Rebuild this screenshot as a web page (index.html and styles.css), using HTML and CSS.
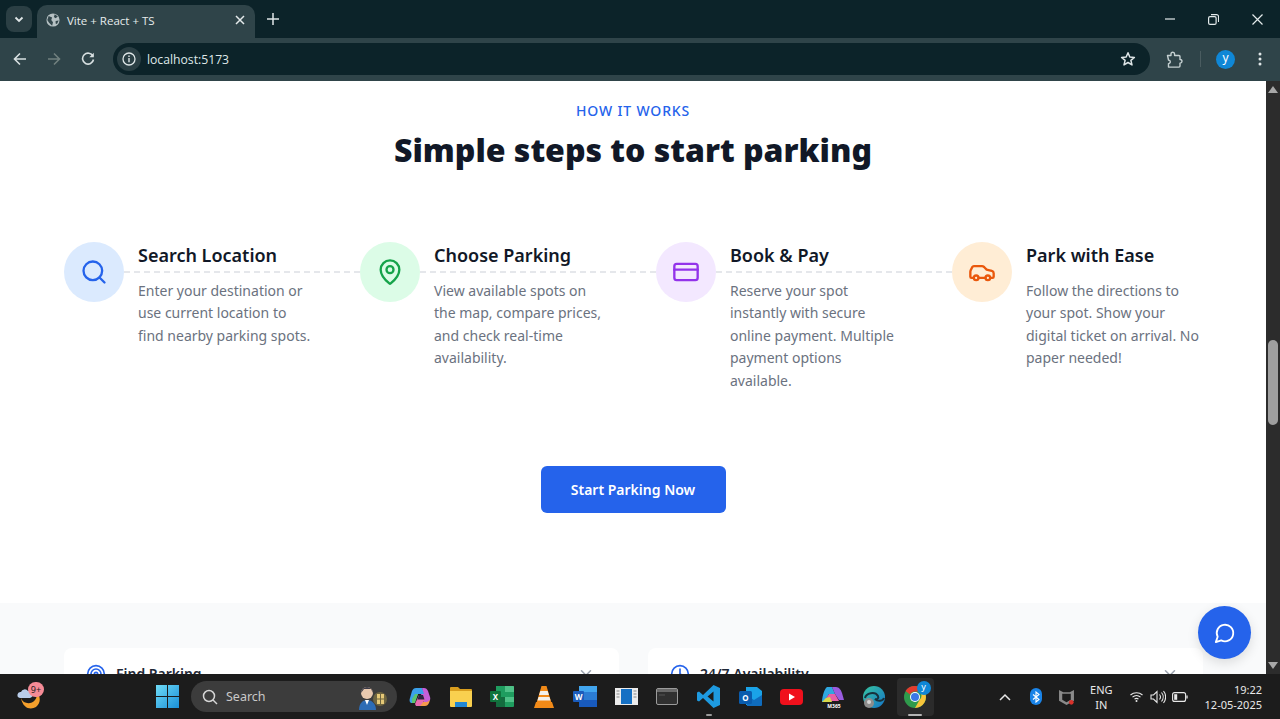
FILE: index.html
```html
<!DOCTYPE html>
<html>

<head>
    <meta name="viewport" content="width=device-width, initial-scale=1">
    <title>Vite + React + TS</title>
    <link rel="stylesheet" href="styles.css">
</head>

<body>
    <div class="screen">
        <!-- Browser frame -->
        <div class="tabstrip">
            <div class="tab-search">
                <svg width="12" height="12" viewBox="0 0 12 12"><path d="M2.500 4.500 6 8l3.500-3.500" fill="none" stroke="#dfe6e7" stroke-width="1.800"/></svg>
            </div>
            <div class="tab">
                <svg width="14" height="14" viewBox="0 0 16 16"><circle cx="8" cy="8" r="7.500" fill="#b6c1c3"/><path d="M3 3.500 7 5 6 8 8 10.500 7 14.500 3.500 11 1.500 8ZM10 1.500 13.500 4 11 6 9 4.500ZM11 9l3.500-.5-2 4-1.500-.5Z" fill="#33474c"/></svg>
                <span class="tab-title">Vite + React + TS</span>
                <svg class="tab-close" width="10" height="10" viewBox="0 0 10 10"><path d="M1 1l8 8M9 1l-8 8" stroke="#e4eaeb" stroke-width="1.500"/></svg>
            </div>
            <svg class="new-tab" width="12" height="12" viewBox="0 0 12 12"><path d="M6 0v12M0 6h12" stroke="#dfe6e7" stroke-width="1.500"/></svg>
            <div class="win-btns">
                <svg width="10" height="10" viewBox="0 0 10 10"><path d="M0 5h10" stroke="#e4eaeb" stroke-width="1.200"/></svg>
                <svg width="11" height="11" viewBox="0 0 11 11"><rect x=".6" y="2.600" width="7.500" height="7.800" rx="1.500" fill="none" stroke="#e4eaeb" stroke-width="1.200"/><path d="M3 .6h5.500a2 2 0 0 1 2 2V8" fill="none" stroke="#e4eaeb" stroke-width="1.100"/></svg>
                <svg width="11" height="11" viewBox="0 0 11 11"><path d="M.5.5l10 10M10.500.5l-10 10" stroke="#e4eaeb" stroke-width="1.200"/></svg>
            </div>
        </div>
        <div class="toolbar">
            <svg class="nav-icon" width="14" height="14" viewBox="0 0 14 14"><path d="M13 7H2M7 1.500 1.500 7 7 12.500" fill="none" stroke="#d8e0e1" stroke-width="1.600"/></svg>
            <svg class="nav-icon" width="14" height="14" viewBox="0 0 14 14"><path d="M1 7h11M7 1.500 12.500 7 7 12.500" fill="none" stroke="#71807f" stroke-width="1.600"/></svg>
            <svg class="nav-icon" width="14" height="14" viewBox="0 0 14 14"><path d="M12 4.200A5.500 5.500 0 1 0 12.500 7.500" fill="none" stroke="#d8e0e1" stroke-width="1.600"/><path d="M12.800 .8v4.500H8.300z" fill="#d8e0e1"/></svg>
            <div class="omnibox">
                <div class="site-info">
                    <svg width="14" height="14" viewBox="0 0 14 14"><circle cx="7" cy="7" r="6" fill="none" stroke="#dfe6e7" stroke-width="1.300"/><path d="M7 6v4.200M7 3.500v1.400" stroke="#dfe6e7" stroke-width="1.400"/></svg>
                </div>
                <span class="url">localhost:5173</span>
                <svg class="star" width="16" height="16" viewBox="0 0 16 16"><path d="M8 1.800 9.800 6l4.600.4-3.500 3 1.100 4.500L8 11.500l-4 2.400 1.100-4.500-3.500-3L6.200 6Z" fill="none" stroke="#dfe6e7" stroke-width="1.500" stroke-linejoin="round"/></svg>
            </div>
            <svg class="puzzle" width="17" height="17" viewBox="0 0 17 17"><path d="M1.500 4.500h3.500V3a1.800 1.800 0 0 1 3.600 0v1.500h4.400a1 1 0 0 1 1 1v3h.2a1.800 1.800 0 0 1 0 3.600h-.2v3a1 1 0 0 1-1 1H2.500v-3.500a1.800 1.800 0 0 0 0-3.600z" fill="none" stroke="#c5d0d1" stroke-width="1.400" stroke-linejoin="round"/></svg>
            <span class="tool-sep"></span>
            <span class="avatar">y</span>
            <svg class="kebab" width="4" height="14" viewBox="0 0 4 14"><circle cx="2" cy="2" r="1.500" fill="#dfe6e7"/><circle cx="2" cy="7" r="1.500" fill="#dfe6e7"/><circle cx="2" cy="12" r="1.500" fill="#dfe6e7"/></svg>
        </div>

        <div class="viewport">
            <div class="page">
                <section class="how">
                    <p class="kicker">HOW IT WORKS</p>
                    <h2>Simple steps to start parking</h2>

                    <div class="steps">
                        <div class="step">
                            <div class="step-icon blue">
                                <svg width="28" height="28" viewBox="0 0 24 24"><circle cx="11" cy="11" r="8"/><path d="m21 21-4.300-4.300"/></svg>
                            </div>
                            <div class="step-text">
                                <h3>Search Location</h3>
                                <p>Enter your destination or use current location to find nearby parking spots.</p>
                            </div>
                        </div>
                        <div class="step">
                            <div class="step-icon green">
                                <svg width="28" height="28" viewBox="0 0 24 24"><path d="M20 10c0 5-5.500 10.200-7.400 11.800a1 1 0 0 1-1.200 0C9.500 20.200 4 15 4 10a8 8 0 0 1 16 0"/><circle cx="12" cy="10" r="3"/></svg>
                            </div>
                            <div class="step-text">
                                <h3>Choose Parking</h3>
                                <p>View available spots on the map, compare prices, and check real-time availability.</p>
                            </div>
                        </div>
                        <div class="step">
                            <div class="step-icon purple">
                                <svg width="28" height="28" viewBox="0 0 24 24"><rect x="2" y="5" width="20" height="14" rx="2"/><path d="M2 10h20"/></svg>
                            </div>
                            <div class="step-text">
                                <h3>Book &amp; Pay</h3>
                                <p>Reserve your spot instantly with secure online payment. Multiple payment options available.</p>
                            </div>
                        </div>
                        <div class="step">
                            <div class="step-icon orange">
                                <svg width="28" height="28" viewBox="0 0 24 24"><path d="M19 17h2c.6 0 1-.4 1-1v-3c0-.9-.7-1.700-1.500-1.900C18.700 10.600 16 10 16 10s-1.300-1.400-2.200-2.300c-.5-.4-1.100-.7-1.800-.7H5c-.6 0-1.100.4-1.400.9l-1.400 2.900A3.700 3.700 0 0 0 2 12v4c0 .6.4 1 1 1h2"/><circle cx="7" cy="17" r="2"/><path d="M9 17h6"/><circle cx="17" cy="17" r="2"/></svg>
                            </div>
                            <div class="step-text">
                                <h3>Park with Ease</h3>
                                <p>Follow the directions to your spot. Show your digital ticket on arrival. No paper needed!</p>
                            </div>
                        </div>
                    </div>

                    <button class="cta">Start Parking Now</button>
                </section>

                <section class="features">
                    <div class="feature-card">
                        <svg class="feature-icon" width="20" height="20" viewBox="0 0 24 24"><circle cx="12" cy="12" r="10"/><circle cx="12" cy="12" r="6"/><circle cx="12" cy="12" r="2"/></svg>
                        <span class="feature-title">Find Parking</span>
                        <svg class="feature-chevron" width="18" height="18" viewBox="0 0 24 24"><path d="m6 9 6 6 6-6"/></svg>
                    </div>
                    <div class="feature-card">
                        <svg class="feature-icon" width="20" height="20" viewBox="0 0 24 24"><circle cx="12" cy="12" r="10"/><path d="M12 6v6l4 2"/></svg>
                        <span class="feature-title">24/7 Availability</span>
                        <svg class="feature-chevron" width="18" height="18" viewBox="0 0 24 24"><path d="m6 9 6 6 6-6"/></svg>
                    </div>
                </section>

                <button class="chat-fab">
                    <svg width="22" height="22" viewBox="0 0 24 24"><path d="M7.900 20A9 9 0 1 0 4 16.100L2 22Z"/></svg>
                </button>
            </div>

            <div class="scrollbar">
                <svg width="10" height="7" viewBox="0 0 10 7"><path d="M5 0l5 7H0z" fill="#a8a8a8"/></svg>
                <div class="scroll-track"><div class="scroll-thumb"></div></div>
                <svg width="10" height="7" viewBox="0 0 10 7"><path d="M5 7l5-7H0z" fill="#a8a8a8"/></svg>
            </div>
        </div>

        <!-- Windows taskbar -->
        <div class="taskbar">
            <div class="weather">
                <svg width="26" height="28" viewBox="0 0 26 28"><path d="M4 15c2 6 10 7 14 2 2-2 2-6 1-8 5 4 5 11 0 15-5 3-13 2-15-9Z" fill="#f5a02c"/><path d="M3 15a3 3 0 0 1 1-6 4 4 0 0 1 7-1 3.500 3.500 0 0 1 2 7Z" fill="#b9cdea"/></svg>
                <span class="badge">9+</span>
            </div>
            <div class="task-center">
                <svg class="start" width="23" height="23" viewBox="0 0 23 23"><defs><linearGradient id="win" x1="0" y1="0" x2="1" y2="1"><stop offset="0" stop-color="#6fdcf7"/><stop offset="1" stop-color="#1a8fd8"/></linearGradient></defs><path d="M0 0h11v11H0zM12 0h11v11H12zM0 12h11v11H0zM12 12h11v11H12z" fill="url(#win)"/></svg>
                <div class="search-box">
                    <svg width="16" height="16" viewBox="0 0 16 16"><circle cx="7" cy="7" r="5.500" fill="none" stroke="#d5d5d5" stroke-width="1.500"/><path d="m11 11 4 4" stroke="#d5d5d5" stroke-width="1.500"/></svg>
                    <span>Search</span>
                    <svg class="search-art" width="34" height="28" viewBox="0 0 34 28"><circle cx="22" cy="16" r="7" fill="#6d6440"/><path d="M19 11h7v10h-7z" fill="#e5c877"/><path d="M22.500 11v10M19 16h7" stroke="#6d6440"/><circle cx="9" cy="10" r="6" fill="#e9c9ae"/><path d="M3 10a6 6 0 0 1 12 0l-2-4H6Z" fill="#3c3c48"/><path d="M1 27c0-7 4-10 8-10s9 3 9 10Z" fill="#2d6cb5"/><path d="M7 17h4l-2 5Z" fill="#fff"/></svg>
                </div>
                <div class="task-icons">
                    <span class="task-icon"><svg width="22" height="22" viewBox="0 0 22 22"><path d="M7 2h6l3 6H9l-4 9H3C1 17 0 15 1 12l2-7c1-2 2-3 4-3Z" fill="#3aa0ea"/><path d="M3 17h3l3-9H6l-3 5Z" fill="#5ac46f"/><path d="M13 2h2c2 0 3 1 4 3l2 6c1 3-1 5-3 5h-3l-3-8h3Z" fill="#c55fd8"/><path d="M9 20h7c2 0 3-1 4-3l1-3-3 2h-4l-2-2-3 4Z" fill="#f59a4c"/><path d="M7 20h4l5-6-2-5h-4l-4 9Z" fill="#e86bb0"/><path d="M10 9h4l1.500 4.500H8.500Z" fill="#2a2440"/></svg></span>
                    <span class="task-icon"><svg width="24" height="21" viewBox="0 0 24 21"><path d="M1 2a1 1 0 0 1 1-1h7l2 2h11a1 1 0 0 1 1 1v3H1Z" fill="#d99e1e"/><path d="M1 5h22v15a1 1 0 0 1-1 1H2a1 1 0 0 1-1-1Z" fill="#f9d04f"/><path d="M6 21v-5h12v5Z" fill="#1f86d4"/></svg></span>
                    <span class="task-icon"><svg width="24" height="21" viewBox="0 0 24 21"><path d="M6 0h17a1 1 0 0 1 1 1v19a1 1 0 0 1-1 1H6Z" fill="#1f9d5f"/><path d="M15 0h8a1 1 0 0 1 1 1v5h-9zM15 11h9v5h-9z" fill="#4fc187"/><path d="M6 11h9v10H6z" fill="#146c3f"/><rect x="0" y="5" width="11" height="11" rx="1" fill="#10743c"/><text class="icon-letter" x="5.500" y="13.500" text-anchor="middle">X</text></svg></span>
                    <span class="task-icon"><svg width="20" height="22" viewBox="0 0 20 22"><path d="M7.500 0h5l5 17h-15Z" fill="#f28a18"/><path d="M6.300 5h7.400l1.200 4H5.100zM4.500 11h11l1 3.500h-13Z" fill="#f3f0ea"/><path d="M2 16h16l2 6H0Z" fill="#f28a18"/></svg></span>
                    <span class="task-icon"><svg width="24" height="21" viewBox="0 0 24 21"><path d="M6 0h17a1 1 0 0 1 1 1v19a1 1 0 0 1-1 1H6Z" fill="#2b7cd3"/><path d="M6 0h18v6H6z" fill="#41a5ee"/><path d="M6 14h18v7H6z" fill="#185abd"/><rect x="0" y="5" width="11" height="11" rx="1" fill="#1a5cbc"/><text class="icon-letter" x="5.500" y="13.500" text-anchor="middle">W</text></svg></span>
                    <span class="task-icon"><svg width="23" height="17" viewBox="0 0 23 17"><rect width="23" height="17" fill="#ececec"/><rect x="6" y="1" width="11" height="15" fill="#1570c4"/><path d="M1.500 3h3M1.500 6h3M1.500 9h3M18.500 3h3M18.500 6h3M18.500 9h3" stroke="#888"/></svg></span>
                    <span class="task-icon"><svg width="22" height="17" viewBox="0 0 22 17"><rect x=".5" y=".5" width="21" height="16" rx="1.500" fill="#303030" stroke="#9b9b9b"/><path d="M1 1h20v3H1z" fill="#6a6a6a"/><path d="M3 7h6" stroke="#555"/></svg></span>
                    <span class="task-icon running"><svg width="23" height="23" viewBox="0 0 23 23"><path d="M16.500 0 23 3v17l-6.500 3L6 13l-4 3.500-2-1V7.500l2-1L6 10ZM16.500 6.500 10.500 11.500l6 5Z" fill="#1e9ae0"/></svg></span>
                    <span class="task-icon"><svg width="23" height="22" viewBox="0 0 23 22"><path d="M7 1h11l5 4v13a1 1 0 0 1-1 1H7Z" fill="#1aa3e8"/><path d="M7 9l8 5 8-5v10a1 1 0 0 1-1 1H8Z" fill="#0f6cbd"/><rect x="0" y="5" width="13" height="13" rx="1.500" fill="#0a5cad"/><text class="icon-letter" x="6.500" y="15" text-anchor="middle">O</text></svg></span>
                    <span class="task-icon"><svg width="23" height="16" viewBox="0 0 23 16"><rect width="23" height="16" rx="4" fill="#f0101c"/><path d="M9 4.500v7l6-3.500Z" fill="#fff"/></svg></span>
                    <span class="task-icon"><svg width="24" height="24" viewBox="0 0 24 24"><path d="M6 2h5l3 7H8l-5 8H1c0-4 2-13 5-15Z" fill="#2fa8e0"/><path d="M11 2h4c3 0 5 3 6 6l2 7h-5l-4-6Z" fill="#9a5ce0"/><path d="M8 9h6l4 7H3Z" fill="#e85fa8"/><path d="M1 17h10l-2-5-4 1Z" fill="#d8d84a"/><text class="m365" x="13" y="23" text-anchor="middle">M365</text></svg></span>
                    <span class="task-icon"><svg width="24" height="24" viewBox="0 0 24 24"><defs><linearGradient id="edge" x1="0" y1="0" x2="1" y2="1"><stop offset="0" stop-color="#36c5a0"/><stop offset="1" stop-color="#1674c8"/></linearGradient></defs><circle cx="12" cy="12" r="11" fill="url(#edge)"/><path d="M3 13c1-5 10-7 13-2 1 2-1 4-3 3 3 3 8 2 9-1" fill="none" stroke="#17313c" stroke-width="2"/><circle cx="7" cy="18" r="5" fill="#8d8d8d"/><circle cx="7" cy="17" r="2" fill="#d5d5d5"/></svg></span>
                    <span class="task-icon chrome-active"><svg width="24" height="24" viewBox="0 0 24 24"><circle cx="12" cy="12" r="11" fill="#2f9b4c"/><path d="M12 1a11 11 0 0 1 9.500 5.500H12a5.500 5.500 0 0 0-5 3L2.500 6A11 11 0 0 1 12 1Z" fill="#e33b2e"/><path d="M21.500 6.500A11 11 0 0 1 12 23l4.500-8a5.500 5.500 0 0 0 0-8.500Z" fill="#f8c43a"/><circle cx="12" cy="12" r="5" fill="#fff"/><circle cx="12" cy="12" r="4" fill="#3b78e7"/></svg><span class="chrome-badge">y</span></span>
                </div>
            </div>
            <div class="tray">
                <svg class="tray-up" width="12" height="8" viewBox="0 0 12 8"><path d="M1 7l5-5 5 5" fill="none" stroke="#e8e8e8" stroke-width="1.500"/></svg>
                <span class="bt-pill"><svg width="8" height="12" viewBox="0 0 8 12"><path d="M1 3.500l6 5L4 11V1l3 2.500-6 5" fill="none" stroke="#fff" stroke-width="1.100"/></svg></span>
                <svg class="mcafee" width="15" height="16" viewBox="0 0 14 15"><path d="M0 1l4 2h6l4-2v10l-7 4-7-4Z" fill="#8a8a8a"/><path d="M3 4.500h8v5.500l-4 2.500-4-2.500Z" fill="#1c1c1c"/><circle cx="11.500" cy="12.500" r="2.200" fill="#d9322b"/></svg>
                <div class="lang">ENG<br>IN</div>
                <div class="tray-status">
                    <svg width="15" height="11" viewBox="0 0 14 11"><path d="M1 4a9 9 0 0 1 12 0M3 6.200a6 6 0 0 1 8 0M5 8.200a3 3 0 0 1 4 0" fill="none" stroke="#e8e8e8" stroke-width="1.100"/><circle cx="7" cy="10" r="1" fill="#e8e8e8"/></svg>
                    <svg width="16" height="14" viewBox="0 0 16 14"><path d="M1 5h2.500L7 1.500v11L3.500 9H1Z" fill="none" stroke="#e8e8e8" stroke-width="1.100"/><path d="M9.500 4.500a4 4 0 0 1 0 5M11.500 2.500a7 7 0 0 1 0 9M13.500 1a9.500 9.500 0 0 1 0 12" fill="none" stroke="#e8e8e8" stroke-width="1.100"/></svg>
                    <svg width="16" height="10" viewBox="0 0 16 10"><rect x=".6" y=".6" width="13" height="8.800" rx="2" fill="none" stroke="#e8e8e8" stroke-width="1.100"/><rect x="2.200" y="2.200" width="3" height="5.600" fill="#e8e8e8"/><path d="M15 3.500v3" stroke="#e8e8e8" stroke-width="1.300"/></svg>
                </div>
                <div class="clock">19:22<br>12-05-2025</div>
            </div>
        </div>
    </div>
</body>

</html>
```
FILE: styles.css
```css
* {
    box-sizing: border-box
}

html,
body {
    margin: 0;
    height: 100%;
    overflow: hidden;
}

body {
    font-family: "Noto Sans", "Open Sans", sans-serif;
}

.screen {
    height: 719px;
    display: flex;
    flex-direction: column;
}

/* Browser frame */
.tabstrip {
    height: 38px;
    background-color: #0c2329;
    display: flex;
    align-items: flex-end;
    padding-left: 6px;
    flex-shrink: 0;
}

.tab-search {
    width: 26px;
    height: 26px;
    margin-bottom: 6px;
    background-color: #2b3f44;
    border-radius: 8px;
    display: flex;
    align-items: center;
    justify-content: center;
}

.tab {
    width: 218px;
    height: 33px;
    margin-left: 5px;
    padding: 0 10px 3px 9px;
    background-color: #2f4449;
    border-radius: 10px 10px 0 0;
    display: flex;
    align-items: center;
    gap: 7px;
}

.tab-title {
    color: #e6ecec;
    font-size: 11.500px;
    font-family: "Open Sans", sans-serif;
    flex: 1;
}

.new-tab {
    margin: 0 0 13px 12px;
}

.win-btns {
    margin-left: auto;
    height: 100%;
    display: flex;
    align-items: center;
    gap: 33px;
    padding: 0 17px 0 0;
}

.toolbar {
    height: 43px;
    background-color: #2f4449;
    display: flex;
    align-items: center;
    padding: 0 18px 1px 13px;
    flex-shrink: 0;
}

.nav-icon {
    margin-right: 20px;
}

.omnibox {
    width: 1038px;
    height: 32px;
    margin-left: -2px;
    background-color: #0c2329;
    border-radius: 16px;
    display: flex;
    align-items: center;
    padding: 0 14px 0 4px;
}

.site-info {
    width: 24px;
    height: 24px;
    background-color: #2b3f44;
    border-radius: 50%;
    display: flex;
    align-items: center;
    justify-content: center;
}

.url {
    color: #dfe8e8;
    font-size: 12.200px;
    font-family: "Open Sans", sans-serif;
    margin-left: 6px;
    flex: 1;
}

.puzzle {
    margin-left: 16px;
}

.tool-sep {
    width: 1px;
    height: 16px;
    background-color: #4a5c60;
    margin-left: 17px;
}

.avatar {
    width: 19px;
    height: 19px;
    margin-left: 15px;
    background-color: #0f87d6;
    border-radius: 50%;
    color: #fff;
    font-size: 12px;
    line-height: 16px;
    text-align: center;
}

.kebab {
    margin-left: 23px;
}

/* Page area */
.viewport {
    flex: 1;
    display: flex;
    min-height: 0;
}

.page {
    flex: 1;
    position: relative;
    overflow: hidden;
    background-color: #fff;
}

.scrollbar {
    width: 14px;
    background-color: #2c2c2c;
    display: flex;
    flex-direction: column;
    align-items: center;
    padding: 5px 0;
}

.scroll-track {
    flex: 1;
    width: 100%;
}

.scroll-thumb {
    width: 10px;
    height: 85px;
    margin: 247px auto 0;
    background-color: #9f9f9f;
    border-radius: 5px;
}

.how {
    height: 522px;
    padding: 20px 64px 0;
    text-align: center;
}

.kicker {
    margin: 0;
    color: #2563eb;
    font-size: 14px;
    line-height: 20px;
    font-weight: 500;
    letter-spacing: 0.85px;
}

h2 {
    margin: 9px 0 0;
    color: #111827;
    font-size: 32px;
    line-height: 40px;
    font-weight: 900;
}

.steps {
    margin-top: 72px;
    display: grid;
    grid-template-columns: repeat(4, 248px);
    gap: 48px;
    text-align: left;
    height: 165px;
}

.step {
    display: flex;
    gap: 14px;
    position: relative;
}

/* Dashed connector to the next step */
.step::after {
    content: "";
    position: absolute;
    left: 60px;
    top: 29px;
    width: 236px;
    border-top: 2px dashed #e5e7eb;
}

.step:last-child::after {
    display: none;
}

.step-icon {
    width: 60px;
    height: 60px;
    border-radius: 50%;
    flex-shrink: 0;
    display: flex;
    align-items: center;
    justify-content: center;
}

.step-icon svg {
    fill: none;
    stroke: currentColor;
    stroke-width: 2;
    stroke-linecap: round;
    stroke-linejoin: round;
}

.blue {
    background-color: #dbeafe;
    color: #2563eb;
}

.green {
    background-color: #dcfce7;
    color: #16a34a;
}

.purple {
    background-color: #f3e8ff;
    color: #9333ea;
}

.orange {
    background-color: #ffedd5;
    color: #ea580c;
}

.step-text {
    flex: 1;
    min-width: 0;
}

h3 {
    margin: -1px 0 11px;
    color: #111827;
    font-size: 18px;
    line-height: 28px;
    font-weight: 600;
}

.step-text p {
    margin: 0;
    color: #6b7280;
    font-size: 14px;
    line-height: 22.400px;
}

.cta {
    display: block;
    width: 185px;
    height: 47px;
    margin: 59px auto 0;
    border: 0;
    border-radius: 6px;
    background-color: #2563eb;
    color: #fff;
    font-family: inherit;
    font-size: 14px;
    font-weight: 600;
}

.features {
    height: 100px;
    background-color: #f9fafb;
    padding: 45px 64px 0;
    display: grid;
    grid-template-columns: 555px 555px;
    gap: 29px;
}

.feature-card {
    height: 80px;
    padding: 16px 24px 16px 22px;
    background-color: #fff;
    border-radius: 8px;
    display: flex;
    align-items: flex-start;
    gap: 10px;
}

.feature-card svg {
    fill: none;
    stroke-width: 2;
    stroke-linecap: round;
    stroke-linejoin: round;
}

.feature-icon {
    stroke: #2563eb;
}

.feature-chevron {
    stroke: #9ca3af;
    margin-left: auto;
}

.feature-title {
    color: #1f2937;
    font-size: 14px;
    font-weight: 600;
    line-height: 20px;
}

.chat-fab {
    position: absolute;
    right: 15px;
    bottom: 15px;
    width: 53px;
    height: 53px;
    border: 0;
    border-radius: 50%;
    background-color: #2563eb;
    box-shadow: 0 4px 12px rgba(0, 0, 0, 0.12);
    display: flex;
    align-items: center;
    justify-content: center;
    padding: 0;
}

.chat-fab svg {
    fill: none;
    stroke: #fff;
    stroke-width: 2;
    stroke-linecap: round;
    stroke-linejoin: round;
}

/* Windows taskbar */
.taskbar {
    height: 45px;
    background-color: #1c1c1c;
    display: flex;
    align-items: center;
    flex-shrink: 0;
    position: relative;
    padding-left: 17px;
}

.weather {
    width: 30px;
    height: 28px;
    position: relative;
}

.badge {
    position: absolute;
    left: 11px;
    top: -1px;
    width: 16px;
    height: 15px;
    border-radius: 8px;
    background-color: #f58b96;
    color: #1c1c1c;
    font-size: 9px;
    line-height: 15px;
    text-align: center;
}

.task-center {
    display: flex;
    align-items: center;
    margin-left: 109px;
}

.search-box {
    width: 206px;
    height: 31px;
    margin-left: 12px;
    padding: 0 5px 0 11px;
    border-radius: 16px;
    background-color: #3c3c3c;
    display: flex;
    align-items: center;
    gap: 8px;
    color: #c9c9c9;
    font-size: 12.500px;
}

.search-art {
    margin-left: auto;
}

.task-icons {
    display: flex;
    align-items: center;
    margin-left: 2px;
}

.task-icon {
    width: 41.300px;
    height: 38px;
    display: flex;
    align-items: center;
    justify-content: center;
    position: relative;
}

.icon-letter {
    fill: #fff;
    font-size: 8px;
    font-weight: 700;
}

.m365 {
    fill: #fff;
    font-size: 5px;
    font-weight: 700;
}

.running::after,
.chrome-active::after {
    content: "";
    position: absolute;
    bottom: 0;
    left: 50%;
    width: 6px;
    height: 2px;
    margin-left: -3px;
    background-color: #9a9a9a;
    border-radius: 1px;
}

.chrome-active {
    width: 37px;
    margin: 0 2px;
    background-color: #2b2b2b;
    border-radius: 4px;
}

.chrome-active::after {
    width: 14px;
    margin-left: -7px;
    background-color: #b5b5b5;
}

.chrome-badge {
    position: absolute;
    right: 3px;
    top: 3px;
    width: 14px;
    height: 14px;
    border-radius: 50%;
    background-color: #0f87d6;
    color: #fff;
    font-size: 9px;
    line-height: 12px;
    text-align: center;
}

.tray {
    margin-left: auto;
    display: flex;
    align-items: center;
    padding-right: 18px;
    color: #e8e8e8;
    font-size: 11px;
}

.bt-pill {
    width: 12px;
    height: 17px;
    margin-left: 19px;
    border-radius: 6px;
    background-color: #1a84e8;
    display: flex;
    align-items: center;
    justify-content: center;
}

.mcafee {
    margin-left: 17px;
}

.lang {
    margin-left: 16px;
    text-align: center;
    line-height: 15px;
}

.tray-status {
    display: flex;
    align-items: center;
    gap: 6px;
    margin-left: 16px;
}

.clock {
    margin-left: 17px;
    text-align: right;
    line-height: 15px;
}
```
